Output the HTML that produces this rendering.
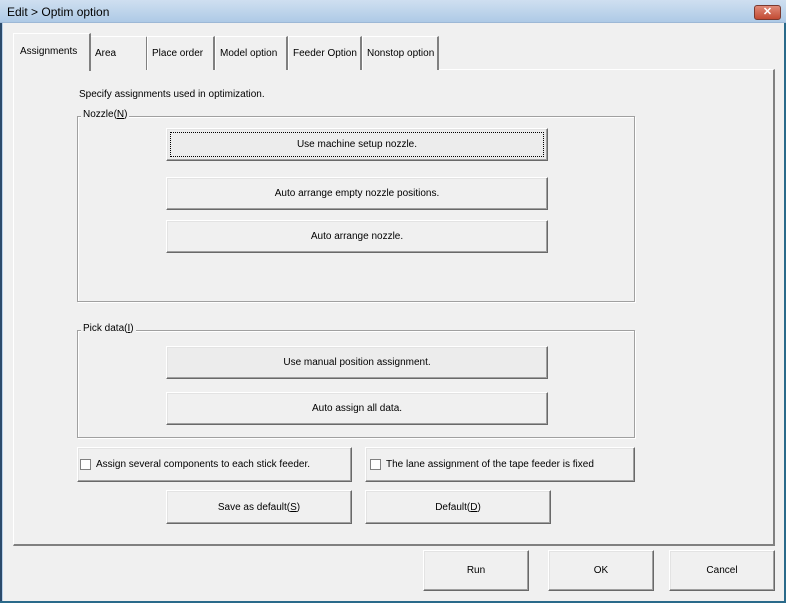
<!DOCTYPE html>
<html><head><meta charset="utf-8"><style>
*{box-sizing:border-box;margin:0;padding:0}
body{width:786px;height:603px;position:relative;background:#f0f0f0;font-family:"Liberation Sans",sans-serif;font-size:10px;color:#000;overflow:hidden;white-space:nowrap}
.a{position:absolute}
.title{left:0;top:0;width:786px;height:23px;background:linear-gradient(#cfdff0,#aecae6);border-bottom:1px solid #9db8d6}
.title span{position:absolute;left:7px;top:5px;font-size:12px}
.close{left:754px;top:5px;width:27px;height:15px;background:linear-gradient(#e08a78,#c24b33);border:1px solid #7a3a30;border-radius:3px;color:#fff;font-size:11px;font-weight:bold;text-align:center;line-height:13px}
.btn{position:absolute;background:#f0f0f0;border-top:1px solid #fff;border-left:1px solid #fff;border-right:1px solid #696969;border-bottom:1px solid #696969;box-shadow:inset -1px -1px 0 #a0a0a0,inset 1px 1px 0 #e3e3e3;text-align:center;display:flex;align-items:center;justify-content:center}
.grp{position:absolute;border:1px solid #a0a0a0;box-shadow:1px 1px 0 #fff inset,1px 1px 0 #fff}
.grp span{position:absolute;left:3px;top:-8px;background:#f0f0f0;padding:0 2px}
.tab{position:absolute;top:36px;height:34px;border-top:1px solid #fff;border-left:1px solid #fff;border-right:2px solid #808080;padding:11px 0 0 4px;background:#f0f0f0}
.cb{display:inline-block;width:11px;height:11px;border:1px solid #808080;background:#fff;margin-right:5px;vertical-align:-2px}
</style></head><body>
<div class="a" style="left:0;top:0;width:2px;height:603px;background:#2b4a6b"></div>
<div class="a" style="left:2px;top:23px;width:1px;height:580px;background:#b9d1ea"></div>
<div class="a" style="left:784px;top:0;width:2px;height:603px;background:#2a6a8a"></div>
<div class="a" style="left:0;top:601px;width:786px;height:2px;background:#2a6a8a"></div>
<div class="a title"><span>Edit &gt; Optim option</span></div>
<div class="a close">✕</div>

<div class="a" style="left:13px;top:69px;width:762px;height:477px;border-top:1px solid #fff;border-left:1px solid #fff;border-right:2px solid #808080;border-bottom:2px solid #808080"></div>

<div class="tab" style="left:90px;width:58px">Area</div>
<div class="tab" style="left:147px;width:68px">Place order</div>
<div class="tab" style="left:215px;width:73px">Model option</div>
<div class="tab" style="left:288px;width:74px">Feeder Option</div>
<div class="tab" style="left:362px;width:77px">Nonstop option</div>
<div class="tab" style="left:13px;top:33px;width:78px;height:38px;border-right:2px solid #808080;padding:12px 0 0 6px">Assignments</div>

<div class="a" style="left:79px;top:89px">Specify assignments used in optimization.</div>

<div class="grp" style="left:77px;top:116px;width:558px;height:186px"><span>Nozzle(<u>N</u>)</span></div>
<div class="btn" style="left:166px;top:128px;width:382px;height:33px;background:#ececec"><div style="position:absolute;left:3px;top:3px;right:3px;bottom:3px;border:1px dotted #000"></div>Use machine setup nozzle.</div>
<div class="btn" style="left:166px;top:177px;width:382px;height:33px">Auto arrange empty nozzle positions.</div>
<div class="btn" style="left:166px;top:220px;width:382px;height:33px">Auto arrange nozzle.</div>

<div class="grp" style="left:77px;top:330px;width:558px;height:108px"><span>Pick data(<u>I</u>)</span></div>
<div class="btn" style="left:166px;top:346px;width:382px;height:33px;background:#ececec">Use manual position assignment.</div>
<div class="btn" style="left:166px;top:392px;width:382px;height:33px">Auto assign all data.</div>

<div class="btn" style="left:77px;top:447px;width:275px;height:35px;justify-content:flex-start;padding-left:2px"><span class="cb"></span>Assign several components to each stick feeder.</div>
<div class="btn" style="left:365px;top:447px;width:270px;height:35px;justify-content:flex-start;padding-left:4px"><span class="cb"></span>The lane assignment of the tape feeder is fixed</div>
<div class="btn" style="left:166px;top:490px;width:186px;height:34px">Save as default(<u>S</u>)</div>
<div class="btn" style="left:365px;top:490px;width:186px;height:34px">Default(<u>D</u>)</div>

<div class="btn" style="left:423px;top:550px;width:106px;height:41px">Run</div>
<div class="btn" style="left:548px;top:550px;width:106px;height:41px">OK</div>
<div class="btn" style="left:669px;top:550px;width:106px;height:41px">Cancel</div>
</body></html>
